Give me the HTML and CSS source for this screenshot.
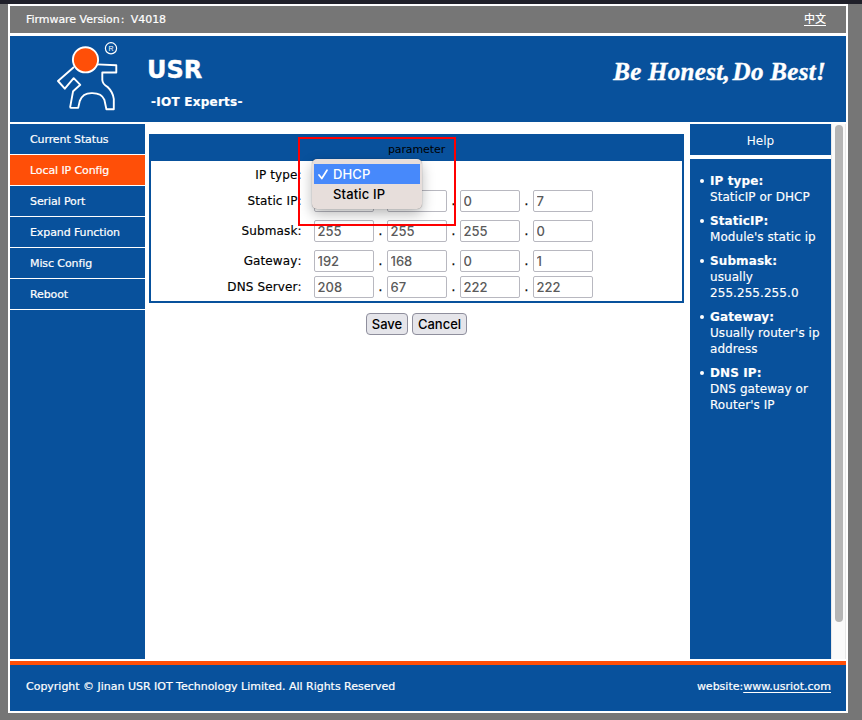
FILE: index.html
```html
<!DOCTYPE html>
<html lang="en">
<head>
<meta charset="utf-8">
<title>USR IOT Config</title>
<link rel="stylesheet" href="styles.css">
</head>
<body>
<div class="frame">
  <div class="topbar"><span class="firmware">Firmware Version<span class="fw-colon">:</span>V4018</span><a class="lang">中文</a></div>
  <header class="header">
    <svg class="logo" width="90" height="80" viewBox="0 0 90 80" fill="none" stroke="#fff" stroke-width="1.9" stroke-linejoin="round">
      <path d="M34 31 18 45l6.800 7.700 8.900-10.500 6.600 6.600-7.200 6.400-2.900 15.700q0 1 1.200 1h6.800l1.600-7q3-8 12-7.800 10-.2 12.600 6.800l2 9.300h7.400V63q-.9-7-6.400-12.200-4.700-2.500-5.100-6.800v-7.500h14v-7.200L57 28.400"/>
      <circle cx="45.500" cy="23.800" r="12.600" fill="#ff4f08"/>
      <circle cx="71" cy="12.300" r="5.600" stroke-width="1.200"/>
      <text class="reg" x="71" y="15.300" text-anchor="middle">R</text>
    </svg>
    <div class="brand"><h1>USR</h1><p>-IOT Experts-</p></div>
    <div class="slogan">Be Honest, <span>Do Best!</span></div>
  </header>
  <div class="body">
    <nav class="nav">
      <a>Current Status</a>
      <a class="active">Local IP Config</a>
      <a>Serial Port</a>
      <a>Expand Function</a>
      <a>Misc Config</a>
      <a>Reboot</a>
    </nav>
    <main class="main">
      <section class="panel">
        <div class="panel-title">parameter</div>
        <div class="row first"><label>IP type<i>:</i></label></div>
        <div class="row"><label>Static IP<i>:</i></label><div class="octets"><input value=""><b class="covered"></b><input value=""><b>.</b><input value="0"><b>.</b><input value="7"></div></div>
        <div class="row"><label>Submask<i>:</i></label><div class="octets"><input value="255"><b>.</b><input value="255"><b>.</b><input value="255"><b>.</b><input value="0"></div></div>
        <div class="row"><label>Gateway<i>:</i></label><div class="octets"><input value="192"><b>.</b><input value="168"><b>.</b><input value="0"><b>.</b><input value="1"></div></div>
        <div class="row last"><label>DNS Server<i>:</i></label><div class="octets"><input value="208"><b>.</b><input value="67"><b>.</b><input value="222"><b>.</b><input value="222"></div></div>
        <div class="highlight"></div>
        <div class="menu">
          <div class="option selected"><svg width="11" height="11" viewBox="0 0 11 11"><path d="M1 6 3.800 9.500 9 1.200" fill="none" stroke="#fff" stroke-width="1.700" stroke-linecap="round" stroke-linejoin="round"/></svg>DHCP</div>
          <div class="option">Static IP</div>
        </div>
      </section>
      <div class="actions"><button class="save">Save</button><button class="cancel">Cancel</button></div>
    </main>
    <aside class="help">
      <h2>Help</h2>
      <ul>
        <li><strong>IP type:</strong><br>StaticIP or DHCP</li>
        <li><strong>StaticIP:</strong><br>Module's static ip</li>
        <li><strong>Submask:</strong><br>usually<br>255.255.255.0</li>
        <li><strong>Gateway:</strong><br>Usually router's ip<br>address</li>
        <li><strong>DNS IP:</strong><br>DNS gateway or<br>Router's IP</li>
      </ul>
    </aside>
    <div class="scroll"><div class="thumb"></div></div>
  </div>
  <footer class="footer"><span class="copy">Copyright © Jinan USR IOT Technology Limited. All Rights Reserved</span><span class="site">website:<a>www.usriot.com</a></span></footer>
</div>
</body>
</html>
```
FILE: styles.css
```css
* { box-sizing: border-box; }
body {
  margin: 0;
  height: 720px;
  overflow: hidden;
  background: #767676;
  border-top: 4px solid #20202a;
  font-family: Verdana, "DejaVu Sans", sans-serif;
  font-size: 11px;
  color: #fff;
  white-space: nowrap;
}
.frame {
  width: 840px;
  height: 709px;
  margin-left: 8px;
  border: 2px solid #fff;
  background: #fff;
}
.topbar {
  height: 27px;
  padding: 0 20px 0 16px;
  background: #767676;
  display: flex;
  justify-content: space-between;
  align-items: center;
}
.firmware { letter-spacing: -0.04px; -webkit-text-stroke: 0.2px #fff; }
.fw-colon { display: inline-block; width: 11px; padding-left: 1px; }
.lang { font-family: "Noto Sans CJK SC", sans-serif; font-weight: 500; line-height: 16px; margin-top: -3px; text-decoration: underline; text-underline-offset: 2px; }
.header {
  height: 86px;
  margin-top: 3px;
  background: #08519c;
  display: flex;
}
.logo { margin-left: 30px; flex: none; }
.reg { font: 7px "Liberation Sans", sans-serif; fill: #fff; stroke: none; }
.brand { margin-left: 17px; width: 200px; }
.brand h1 { margin: 18px 0 0; font-size: 24px; line-height: 32px; -webkit-text-stroke: 0.4px #fff; }
.brand p { margin: 8px 0 0 4px; font-size: 12px; line-height: 16px; font-weight: bold; letter-spacing: 0.25px; -webkit-text-stroke: 0.2px #fff; }
.slogan {
  margin: 22px 20px 0 auto;
  font: italic bold 25px/28px "Liberation Serif", serif;
  letter-spacing: 0.3px;
  -webkit-text-stroke: 0.4px #fff;
}
.slogan span { margin-left: -4px; }
.body { height: 535px; margin-top: 2px; display: flex; }
.nav { width: 135px; background: #08519c; }
.nav a {
  display: block;
  height: 31px;
  line-height: 32px;
  padding-left: 20px;
  border-bottom: 1px solid #fff;
  letter-spacing: -0.1px;
  -webkit-text-stroke: 0.2px #fff;
}
.nav .active { background: #ff4f08; }
.main { width: 545px; padding: 10px 6px 0 4px; }
.panel {
  position: relative;
  width: 535px;
  height: 169px;
  border: 2px solid #08519c;
  color: #000;
}
.panel-title { height: 25px; line-height: 28px; background: #08519c; text-align: center; letter-spacing: -0.1px; }
.row { display: flex; align-items: center; height: 30px; font-size: 12px; }
.row.first { height: 25px; padding-top: 2px; }
.row.last { height: 22px; }
.row label { width: 152px; text-align: right; letter-spacing: 0.12px; -webkit-text-stroke: 0.15px #000; }
.row i { display: inline-block; width: 5.5px; font-style: normal; text-align: left; }
.octets { margin-left: 11px; display: flex; align-items: center; }
.octets input {
  width: 60px;
  height: 22px;
  border: 1px solid #b8b8c0;
  border-radius: 2px;
  padding: 0 2px 0 2.5px;
  background: #fff;
  color: #5a5a5a;
  font: 500 13px Inter, sans-serif;
}
.octets b { width: 13px; text-align: center; font-weight: normal; -webkit-text-stroke: 0.3px #000; }
.highlight {
  position: absolute;
  left: 147px;
  top: 1px;
  width: 158px;
  height: 89px;
  border: 2px solid #f00;
}
.menu {
  position: absolute;
  left: 161px;
  top: 23px;
  width: 110px;
  height: 50px;
  padding: 5px 2px;
  border-radius: 5px;
  background: #e7dedb;
  box-shadow: 0 0 1px rgba(0,0,0,.5), 0 5px 13px rgba(0,0,0,.28);
  font: 500 13px Inter, sans-serif;
  letter-spacing: 0.15px;
}
.option { height: 20px; line-height: 21px; padding-left: 19px; position: relative; }
.option svg { position: absolute; left: 4px; top: 5px; }
.selected { background: #4789fb; color: #fff; }
.actions { display: flex; gap: 4px; margin: 10px 0 0 217px; }
.actions button {
  height: 22px;
  padding: 0;
  border: 1px solid #8f8f9d;
  border-radius: 4px;
  background: #e5e5ea;
  color: #000;
  font: 500 13px Inter, sans-serif;
}
.actions .save { width: 42px; }
.actions .cancel { width: 55px; }
.help { width: 141px; background: #08519c; }
.help h2 {
  margin: 0;
  height: 35px;
  line-height: 34px;
  border-bottom: 4px solid #fff;
  text-align: center;
  font-size: 12px;
  font-weight: normal;
}
.help ul { margin: 14px 0 0; padding: 0 0 0 20px; list-style: none; }
.help li { margin-bottom: 8px; font-size: 12px; line-height: 16px; position: relative; letter-spacing: 0.06px; -webkit-text-stroke: 0.15px #fff; }
.help strong { letter-spacing: 0.1px; }
.help li::before {
  content: "";
  position: absolute;
  left: -10px;
  top: 6px;
  width: 4px;
  height: 4px;
  border-radius: 50%;
  background: #fff;
}
.scroll { width: 15px; background: #fafafa; border: solid #e8e8e8; border-width: 0 1px; padding: 1px 3px; }
.thumb { width: 8px; height: 497px; border-radius: 4px; background: #b5b5b5; }
.footer {
  height: 50px;
  margin-top: 2px;
  padding: 0 15px 0 16px;
  background: #08519c;
  border-top: 4px solid #ff4f08;
  line-height: 43px;
  display: flex;
  justify-content: space-between;
  -webkit-text-stroke: 0.2px #fff;
}
.copy { letter-spacing: -0.015px; }
.footer a { text-decoration: underline; text-underline-offset: 2px; }
```
